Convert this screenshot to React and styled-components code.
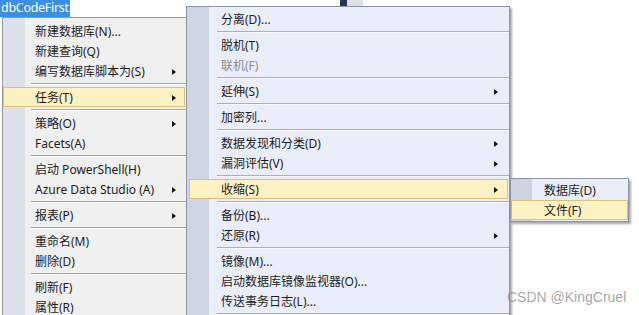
import styled, { createGlobalStyle } from 'styled-components';

const GlobalStyle = createGlobalStyle`
  html, body {
    margin: 0;
    padding: 0;
    background: #fff;
  }
  body {
    font-family: "Noto Sans", "Noto Sans CJK SC", sans-serif;
  }
`;

const SEP = 'sep';

const rootMenu = [
  { label: '新建数据库(N)...' },
  { label: '新建查询(Q)' },
  { label: '编写数据库脚本为(S)', sub: true },
  SEP,
  { label: '任务(T)', sub: true, active: true },
  SEP,
  { label: '策略(O)', sub: true },
  { label: 'Facets(A)' },
  SEP,
  { label: '启动 PowerShell(H)' },
  { label: 'Azure Data Studio (A)', sub: true },
  SEP,
  { label: '报表(P)', sub: true },
  SEP,
  { label: '重命名(M)' },
  { label: '删除(D)' },
  SEP,
  { label: '刷新(F)' },
  { label: '属性(R)' },
];

const taskMenu = [
  { label: '分离(D)...' },
  SEP,
  { label: '脱机(T)' },
  { label: '联机(F)', disabled: true },
  SEP,
  { label: '延伸(S)', sub: true },
  SEP,
  { label: '加密列...' },
  SEP,
  { label: '数据发现和分类(D)', sub: true },
  { label: '漏洞评估(V)', sub: true },
  SEP,
  { label: '收缩(S)', sub: true, active: true },
  SEP,
  { label: '备份(B)...' },
  { label: '还原(R)', sub: true },
  SEP,
  { label: '镜像(M)...' },
  { label: '启动数据库镜像监视器(O)...' },
  { label: '传送事务日志(L)...' },
  SEP,
];

const shrinkMenu = [
  { label: '数据库(D)' },
  { label: '文件(F)', active: true },
];

const Page = styled.div`
  position: relative;
  width: 639px;
  height: 315px;
  overflow: hidden;
  background: #fff;
`;

const TopStrip = styled.div`
  display: grid;
  grid-template-columns: 340px 7px 16px;
  height: 17px;
`;

const Selected = styled.span`
  justify-self: start;
  height: 17px;
  line-height: 16px;
  padding: 0 1px;
  background: #3c8ee0;
  color: #fff;
  font-family: "Noto Sans", sans-serif;
  font-size: 12.5px;
  letter-spacing: -0.3px;
  white-space: nowrap;
`;

const ScrollThumb = styled.span`
  display: block;
  height: 7px;
  background: ${(p) => p.$color};
`;

const Menu = styled.ul`
  position: absolute;
  left: ${(p) => p.$left}px;
  top: ${(p) => p.$top}px;
  width: ${(p) => p.$width}px;
  margin: 0;
  padding: ${(p) => p.$pad}px 0;
  list-style: none;
  border: 1px solid ${(p) => p.$border};
  background: linear-gradient(
    to right,
    ${(p) => p.$gutter} 0,
    ${(p) => p.$gutter} ${(p) => p.$gutterW}px,
    ${(p) => p.$bg} ${(p) => p.$gutterW}px
  );
  box-shadow: ${(p) => (p.$shadow ? '2px 2px 2px rgba(60, 64, 80, 0.45)' : 'none')};
  box-sizing: border-box;
`;

const Item = styled.li`
  display: grid;
  grid-template-columns: 1fr 12px;
  align-items: center;
  height: 20px;
  box-sizing: border-box;
  margin: 0 ${(p) => p.$mr}px 0 ${(p) => p.$ml}px;
  padding: 0 ${(p) => p.$pr}px 0 ${(p) => p.$pl}px;
  border: 1px solid ${(p) => (p.$active ? '#d9c17a' : 'transparent')};
  background: ${(p) => (p.$active ? '#fcf2c4' : 'transparent')};
  color: ${(p) => (p.$disabled ? '#8f8f8f' : '#1c1c1c')};
  font-size: 12px;
  line-height: 19px;
  white-space: nowrap;
`;

const Arrow = styled.span`
  justify-self: end;
  width: 0;
  height: 0;
  border-left: 4px solid #111;
  border-top: 3.5px solid transparent;
  border-bottom: 3.5px solid transparent;
`;

const Separator = styled.li`
  height: 6px;
  box-sizing: border-box;
  padding-top: 2px;
  margin-left: ${(p) => p.$inset}px;

  &::before {
    content: '';
    display: block;
    height: 1px;
    background: ${(p) => p.$line};
    border-bottom: 1px solid ${(p) => p.$light};
  }
`;

const Watermark = styled.span`
  position: absolute;
  left: 507px;
  top: 289px;
  font-family: "Liberation Sans", Arial, sans-serif;
  font-size: 14px;
  color: rgba(150, 150, 150, 0.85);
  white-space: nowrap;
`;

const ContextMenu = ({ items, look }) => (
  <Menu
    $left={look.left}
    $top={look.top}
    $width={look.width}
    $pad={look.pad}
    $border={look.border}
    $gutter={look.gutter}
    $gutterW={look.gutterW}
    $bg={look.bg}
    $shadow={look.shadow}
  >
    {items.map((it, i) =>
      it === SEP ? (
        <Separator key={i} $inset={look.sepInset} $line={look.sepLine} $light={look.sepLight} />
      ) : (
        <Item
          key={i}
          $active={it.active}
          $disabled={it.disabled}
          $ml={look.ml}
          $mr={look.mr}
          $pl={look.pl}
          $pr={look.pr}
        >
          <span>{it.label}</span>
          {it.sub ? <Arrow /> : <span />}
        </Item>
      )
    )}
  </Menu>
);

const rootLook = {
  left: 2,
  top: 17,
  width: 186,
  pad: 3,
  border: '#979797',
  gutter: '#dfe1ea',
  gutterW: 22,
  bg: '#f0f0f0',
  shadow: false,
  ml: 0,
  mr: 2,
  pl: 31,
  pr: 8,
  sepInset: 28,
  sepLine: '#a6a6a6',
  sepLight: '#ffffff',
};

const taskLook = {
  left: 186,
  top: 6,
  width: 324,
  pad: 2,
  border: '#8e94a6',
  gutter: '#cfd5e4',
  gutterW: 22,
  bg: '#eaeefb',
  shadow: true,
  ml: 2,
  mr: 1,
  pl: 31,
  pr: 9,
  sepInset: 30,
  sepLine: '#a9afc2',
  sepLight: '#f7f8fd',
};

const shrinkLook = {
  left: 510,
  top: 178,
  width: 119,
  pad: 1,
  border: '#8e94a6',
  gutter: '#cdd3e2',
  gutterW: 21,
  bg: '#eaeefb',
  shadow: true,
  ml: 0,
  mr: 0,
  pl: 32,
  pr: 6,
  sepInset: 30,
  sepLine: '#a9afc2',
  sepLight: '#f7f8fd',
};

export default function App() {
  return (
    <>
      <GlobalStyle />
      <Page>
        <TopStrip>
          <Selected>dbCodeFirst</Selected>
          <ScrollThumb $color="#27355f" />
          <ScrollThumb $color="#dedfe3" />
        </TopStrip>
        <ContextMenu items={rootMenu} look={rootLook} />
        <ContextMenu items={taskMenu} look={taskLook} />
        <ContextMenu items={shrinkMenu} look={shrinkLook} />
        <Watermark>CSDN @KingCruel</Watermark>
      </Page>
    </>
  );
}
